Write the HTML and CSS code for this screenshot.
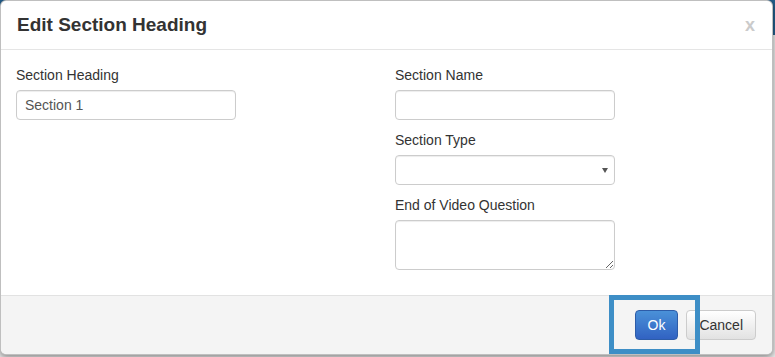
FILE: index.html
```html
<!DOCTYPE html>
<html lang="en">
<head>
  <meta charset="UTF-8">
  <meta name="viewport" content="width=device-width, initial-scale=1.0">
  <title>Edit Section Heading</title>
  <link rel="stylesheet" href="styles.css">
</head>
<body>

  <div class="modal">

    <div class="modal-header">
      <h4 class="modal-title">Edit Section Heading</h4>
      <span class="close">x</span>
    </div>

    <div class="modal-body">
      <div class="col">
        <div class="form-group">
          <label>Section Heading</label>
          <input type="text" class="form-control" value="Section 1">
        </div>
      </div>
      <div class="col">
        <div class="form-group">
          <label>Section Name</label>
          <input type="text" class="form-control">
        </div>
        <div class="form-group">
          <label>Section Type</label>
          <div class="select-wrap">
            <select class="form-control"><option></option></select>
          </div>
        </div>
        <div class="form-group">
          <label>End of Video Question</label>
          <textarea class="form-control"></textarea>
        </div>
      </div>
    </div>

    <div class="modal-footer">
      <button class="btn btn-primary">Ok</button>
      <button class="btn btn-default">Cancel</button>
    </div>

    <div class="highlight"></div>

  </div>

</body>
</html>
```

FILE: styles.css
```css
body {
  margin: 0;
  font-family: "Liberation Sans", Arial, sans-serif;
  font-size: 14px;
  color: #333;
  background: linear-gradient(#235e8b 0, #235e8b 35px, #ebebeb 35px);
  height: 357px;
  overflow: hidden;
}
.modal {
  position: relative;
  width: 771px;
  background-color: #fff;
  border: 1px solid rgba(0,0,0,0.25);
  border-radius: 6px;
  box-shadow: 0 2px 6px rgba(0,0,0,0.45);
  overflow: hidden;
}
.modal-header {
  display: flex;
  justify-content: space-between;
  align-items: center;
  padding: 12px 17px 12px 16px;
  border-bottom: 1px solid #e5e5e5;
}
.modal-title {
  margin: 0;
  font-size: 19px;
  line-height: 24px;
  font-weight: bold;
  color: #333;
}
.close {
  font-size: 18px;
  font-weight: bold;
  color: #cbcbcb;
  line-height: 24px;
}
.modal-body {
  display: grid;
  grid-template-columns: 379px 1fr;
  padding: 15px 15px 15px 15px;
}
.form-group {
  margin-bottom: 10px;
}
label {
  display: block;
  line-height: 20px;
  margin-bottom: 5px;
}
.form-control {
  display: block;
  box-sizing: border-box;
  width: 220px;
  height: 30px;
  padding: 4px 8px;
  font-family: inherit;
  font-size: 14px;
  color: #555;
  background-color: #fff;
  border: 1px solid #ccc;
  border-radius: 4px;
  box-shadow: inset 0 1px 1px rgba(0,0,0,0.075);
  margin: 0;
}
select.form-control {
  appearance: none;
  -webkit-appearance: none;
}
.select-wrap {
  position: relative;
  width: 220px;
}
.select-wrap::after {
  content: "";
  position: absolute;
  right: 7px;
  top: 13px;
  border-left: 3px solid transparent;
  border-right: 3px solid transparent;
  border-top: 5px solid #555;
}
textarea.form-control {
  height: 50px;
  resize: vertical;
}
.modal-footer {
  display: flex;
  justify-content: flex-end;
  gap: 8px;
  padding: 14px 16px 14px 15px;
  background-color: #f4f4f4;
  border-top: 1px solid #e2e2e2;
}
.btn {
  height: 30px;
  padding: 4px 12px;
  font-family: inherit;
  font-size: 14px;
  line-height: 20px;
  border-radius: 4px;
  border: 1px solid #ccc;
  cursor: pointer;
}
.btn-primary {
  color: #fff;
  background: linear-gradient(#4a91d8, #3162c2);
  border-color: #2d5ca8;
}
.btn-default {
  color: #333;
  background: linear-gradient(#fff, #e2e2e2);
  border-color: #ccc;
}
.highlight {
  position: absolute;
  left: 608px;
  top: 294px;
  width: 81px;
  height: 49px;
  border: 5px solid #3d8ec6;
}
```
